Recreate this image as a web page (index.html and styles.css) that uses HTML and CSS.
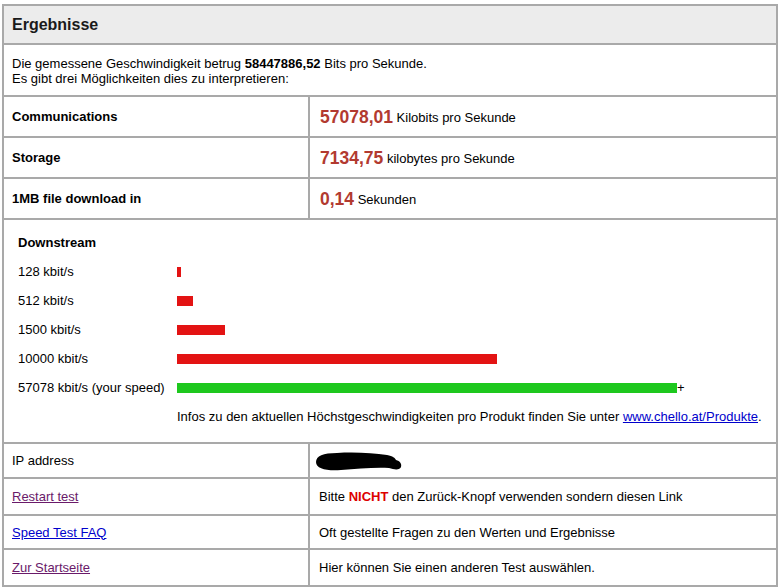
FILE: index.html
```html
<!DOCTYPE html>
<html lang="de">
<head>
<meta charset="utf-8">
<title>Ergebnisse</title>
<link rel="stylesheet" href="styles.css">
</head>
<body>
<div class="panel">
  <div class="title">Ergebnisse</div>
  <div class="row intro">
    <div>Die gemessene Geschwindigkeit betrug <b>58447886,52</b> Bits pro Sekunde.</div>
    <div>Es gibt drei Möglichkeiten dies zu interpretieren:</div>
  </div>
  <div class="row pair tall">
    <div class="cell label">Communications</div>
    <div class="cell value"><span class="num">57078,01</span>&nbsp;Kilobits pro Sekunde</div>
  </div>
  <div class="row pair tall">
    <div class="cell label">Storage</div>
    <div class="cell value"><span class="num">7134,75</span>&nbsp;kilobytes pro Sekunde</div>
  </div>
  <div class="row pair tall">
    <div class="cell label">1MB file download in</div>
    <div class="cell value"><span class="num">0,14</span>&nbsp;Sekunden</div>
  </div>
  <div class="row chart">
    <div class="chart-head">Downstream</div>
    <div class="chart-label">128 kbit/s</div>
    <div class="chart-bar"><span class="bar red" style="width:4px"></span></div>
    <div class="chart-label">512 kbit/s</div>
    <div class="chart-bar"><span class="bar red" style="width:16px"></span></div>
    <div class="chart-label">1500 kbit/s</div>
    <div class="chart-bar"><span class="bar red" style="width:48px"></span></div>
    <div class="chart-label">10000 kbit/s</div>
    <div class="chart-bar"><span class="bar red" style="width:320px"></span></div>
    <div class="chart-label">57078 kbit/s (your speed)</div>
    <div class="chart-bar"><span class="bar green" style="width:500px"></span><span class="plus">+</span></div>
    <div class="chart-info">Infos zu den aktuellen Höchstgeschwindigkeiten pro Produkt finden Sie unter <a class="link" href="#">www.chello.at/Produkte</a>.</div>
  </div>
  <div class="row pair h-ip">
    <div class="cell">IP address</div>
    <div class="cell value">
      <svg class="blob" width="88" height="20" viewBox="0 0 88 20" aria-hidden="true">
        <path d="M1,10 C1,4 8,1 22,1 C40,0 58,1 72,3 C78,4 80,6 81,8 C85,9 87,12 86,15 C85,18 80,18 74,16 C60,15 42,17 26,18 C12,19 1,17 1,10 Z" fill="#000"/>
      </svg>
    </div>
  </div>
  <div class="row pair h-b">
    <div class="cell"><a class="visited" href="#">Restart test</a></div>
    <div class="cell value">Bitte&nbsp;<b class="warn">NICHT</b>&nbsp;den Zurück-Knopf verwenden sondern diesen Link</div>
  </div>
  <div class="row pair h-c">
    <div class="cell"><a class="link" href="#">Speed Test FAQ</a></div>
    <div class="cell value">Oft gestellte Fragen zu den Werten und Ergebnisse</div>
  </div>
  <div class="row pair h-b">
    <div class="cell"><a class="visited" href="#">Zur Startseite</a></div>
    <div class="cell value">Hier können Sie einen anderen Test auswählen.</div>
  </div>
</div>
</body>
</html>
```

FILE: styles.css
```css
html, body {
  margin: 0;
  padding: 0;
  background: #fff;
}

.panel {
  margin: 4px 0 0 2px;
  width: 776px;
  box-sizing: border-box;
  border: 2px solid #a9a9a9;
  font-family: "Liberation Sans", Arial, sans-serif;
  font-size: 13px;
  color: #000;
}

.row {
  border-top: 2px solid #a9a9a9;
}

.title {
  height: 37px;
  background: #ececec;
  padding-left: 8px;
  display: flex;
  align-items: center;
  font-size: 16px;
  font-weight: bold;
  color: #1a1a1a;
}

.intro {
  height: 49px;
  padding-top: 1px;
  padding-left: 8px;
  display: flex;
  flex-direction: column;
  justify-content: center;
  line-height: 15px;
}

.pair {
  display: grid;
  grid-template-columns: 304px 1fr;
}

.pair.tall { height: 39px; }
.pair.h-ip { height: 33px; }
.pair.h-b { height: 35px; }
.pair.h-c { height: 32px; }

.cell {
  display: flex;
  align-items: center;
  padding-left: 8px;
}

.cell.value {
  border-left: 2px solid #a9a9a9;
  padding-left: 9px;
}

.tall .cell.value {
  padding-top: 2px;
  box-sizing: border-box;
}

.label {
  font-weight: bold;
}

.value .num {
  font-size: 17.5px;
  font-weight: bold;
  color: #b23a30;
  margin-left: 1px;
}

.chart {
  height: 224px;
  box-sizing: border-box;
  padding: 8px 0 0 14px;
  display: grid;
  grid-template-columns: 159px 1fr;
  grid-auto-rows: 29px;
  align-items: center;
}

.chart-head {
  grid-column: 1 / 3;
  font-weight: bold;
}

.chart-bar {
  display: flex;
  align-items: center;
}

.bar {
  display: block;
  height: 10px;
}

.bar.red { background: #e31313; }
.bar.green { background: #1ec81e; }

.plus {
  font-size: 13px;
  line-height: 10px;
  margin-left: 0;
}

.chart-info {
  grid-column: 2;
}

.link {
  color: #0000cc;
  text-decoration: underline;
}

.visited {
  color: #6a1a6a;
  text-decoration: underline;
}

.warn {
  color: #dd0000;
}

.blob {
  display: block;
  margin-left: -4px;
  margin-top: 2px;
}
```
